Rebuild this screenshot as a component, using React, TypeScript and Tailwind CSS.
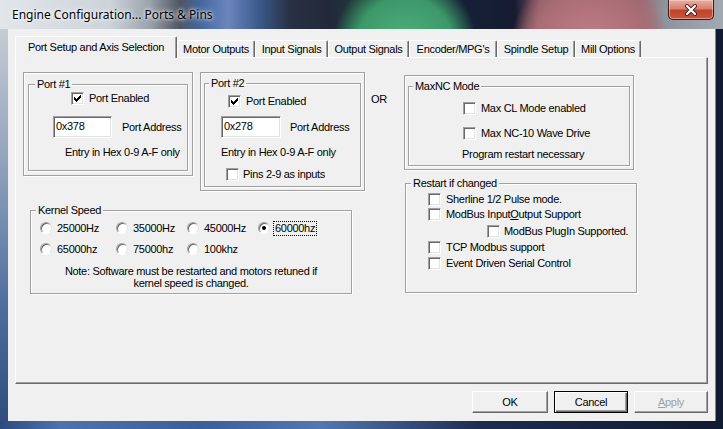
import React from 'react'

const Check = ({ checked = false }: { checked?: boolean }) => (
  <span className="w-[13px] h-[13px] shrink-0 bg-white border border-t-[#a0a0a0] border-l-[#a0a0a0] border-b-white border-r-white shadow-[inset_1px_1px_0_#696969,inset_-1px_-1px_0_#e3e3e3] flex items-center justify-center">
    {checked && (
      <svg width="7" height="7" viewBox="0 0 7 7" shapeRendering="crispEdges">
        <path
          d="M6 0h1v1h-1zM5 1h2v1h-2zM0 2h1v1h-1zM4 2h3v1h-3zM0 3h2v1h-2zM3 3h3v1h-3zM0 4h5v1h-5zM1 5h3v1h-3zM2 6h1v1h-1z"
          fill="#000"
        />
      </svg>
    )}
  </span>
)

const Radio = ({ checked = false }: { checked?: boolean }) => (
  <span className="w-[12px] h-[12px] shrink-0 rounded-full bg-white border border-t-[#a0a0a0] border-l-[#a0a0a0] border-b-white border-r-[#e3e3e3] shadow-[inset_1px_1px_0_#696969] flex items-center justify-center">
    {checked && <span className="w-[4px] h-[4px] rounded-full bg-black" />}
  </span>
)

// etched group box, legend sits on the top line
const Group = ({ label, lm, className, children }: { label: string; lm: string; className?: string; children?: React.ReactNode }) => (
  <fieldset className={`border border-[#a0a0a0] shadow-[inset_1px_1px_0_#fff,1px_1px_0_#fff] ${className ?? ''}`}>
    <legend className={`${lm} px-[2px] bg-[#f0f0f0] leading-[13px]`}>{label}</legend>
    {children}
  </fieldset>
)

const Row = ({ className, checked, children }: { className?: string; checked?: boolean; children: React.ReactNode }) => (
  <div className={`flex items-center h-[14px] gap-[5px] ${className ?? ''}`}>
    <Check checked={checked} />
    <span>{children}</span>
  </div>
)

const HexInput = ({ value, w }: { value: string; w: string }) => (
  <div className={`${w} h-[22px] bg-white border border-t-[#a0a0a0] border-l-[#a0a0a0] border-b-white border-r-white shadow-[inset_1px_1px_0_#696969,inset_-1px_-1px_0_#e3e3e3] pl-[2px] pt-[3px] leading-[13px]`}>
    {value}
  </div>
)

const RadioItem = ({ label, w, checked, focus }: { label: string; w: string; checked?: boolean; focus?: boolean }) => (
  <div className={`flex items-center gap-[3px] ${w}`}>
    <Radio checked={checked} />
    <span className={focus ? 'border border-dotted border-black px-[1px] leading-[13px]' : 'px-[2px]'}>{label}</span>
  </div>
)

const tabs = [
  { label: 'Motor Outputs', w: 'w-[78px]' },
  { label: 'Input Signals', w: 'w-[73px]' },
  { label: 'Output Signals', w: 'w-[81px]' },
  { label: "Encoder/MPG's", w: 'w-[88px]' },
  { label: 'Spindle Setup', w: 'w-[78px]' },
  { label: 'Mill Options', w: 'w-[66px]' },
]

export default function App() {
  return (
    <div className="w-[723px] h-[429px] flex flex-col overflow-hidden bg-[#141d35] font-['Liberation_Sans',Arial,sans-serif] text-[11px] leading-[13px] tracking-[-0.3px] text-black">
      {/* title bar over glass */}
      <div className="h-[29px] shrink-0 flex justify-between bg-[radial-gradient(circle_at_405px_45px,#52b07f_0,#3c9868_48px,transparent_72px),radial-gradient(circle_at_590px_48px,#c3808a_0,#aa6d75_55px,transparent_80px),linear-gradient(90deg,#e2e6eb_0px,#cdd3da_110px,#9aa2ac_150px,#4e5563_180px,#44679e_200px,#6a86bd_228px,#3c5b8d_258px,#283043_290px,#23293a_330px,#1d3a3a_360px,#152036_470px,#161b30_515px,#8a5862_540px,#9c666e_640px,#8e949d_665px,#a3a9b1_723px)]">
        <div className="pl-[12px] pt-[8px] font-['Noto_Sans',sans-serif] text-[12px] leading-[14px] tracking-[0px] [text-shadow:0_0_6px_#fff,0_0_3px_#fff]">
          Engine Configuration... Ports &amp; Pins
        </div>
        <div className="mr-[9px] w-[46px] h-[20px] rounded-b-[5px] border border-t-0 border-[#3b1c1c] bg-[linear-gradient(180deg,#e6b0a4_0%,#d8806c_45%,#c1432c_55%,#c8563c_100%)] shadow-[inset_0_0_0_1px_rgba(255,220,210,0.5)] flex items-center justify-center">
          <svg width="14" height="12" viewBox="0 0 14 12">
            <path d="M3 2l8 8M11 2l-8 8" stroke="#4a1f1a" strokeWidth="4" strokeLinecap="round" />
            <path d="M3 2l8 8M11 2l-8 8" stroke="#fff" strokeWidth="2.2" strokeLinecap="round" />
          </svg>
        </div>
      </div>

      <div className="flex flex-1">
        <div className="w-[8px] bg-[linear-gradient(180deg,#c5ccd5_0%,#8fa1bc_35%,#4f6f9f_70%,#2f4d80_100%)]" />

        {/* client area */}
        <div className="w-[707px] h-[392px] bg-[#f0f0f0] flex flex-col px-[7px] pt-[7px]">
          {/* tab strip */}
          <div className="h-[21px] flex items-end relative z-10">
            <div className="w-[162px] h-[22px] -mb-[1px] bg-[#f0f0f0] border-t border-l border-white border-r border-r-[#696969] shadow-[inset_-1px_0_0_#a0a0a0] rounded-t-[2px] flex items-center justify-center">
              Port Setup and Axis Selection
            </div>
            {tabs.map((t) => (
              <div
                key={t.label}
                className={`${t.w} h-[17px] border-t border-l border-white border-r border-r-[#696969] shadow-[inset_-1px_0_0_#a0a0a0] rounded-t-[2px] flex items-center justify-center`}
              >
                {t.label}
              </div>
            ))}
          </div>

          {/* tab page */}
          <div className="h-[327px] border border-t-white border-l-white border-r-[#696969] border-b-[#696969] shadow-[inset_-1px_-1px_0_#a0a0a0] flex pl-[7px] pt-[14px]">
            <div className="w-[381px] flex flex-col">
              <div className="flex items-start">
                {/* Port #1 */}
                <div className="w-[170px] h-[104px] border border-[#a0a0a0] shadow-[inset_1px_1px_0_#fff,1px_1px_0_#fff] px-[4px] pt-[5px] pb-[4px] flex flex-col">
                  <Group label="Port #1" lm="ml-[6px]" className="flex-1">
                    <Row className="pl-[42px]" checked>Port Enabled</Row>
                    <div className="flex items-center gap-[10px] mt-[11px] pl-[24px]">
                      <HexInput value="0x378" w="w-[59px]" />
                      <span>Port Address</span>
                    </div>
                    <div className="mt-[8px] pl-[36px]">Entry in Hex 0-9 A-F only</div>
                  </Group>
                </div>

                {/* Port #2 */}
                <div className="ml-[7px] w-[165px] h-[119px] border border-[#a0a0a0] shadow-[inset_1px_1px_0_#fff,1px_1px_0_#fff] px-[3px] pt-[4px] pb-[3px] flex flex-col">
                  <Group label="Port #2" lm="ml-[4px]" className="flex-1">
                    <Row className="pl-[23px] mt-[4px]" checked>Port Enabled</Row>
                    <div className="flex items-center gap-[9px] mt-[8px] pl-[16px]">
                      <HexInput value="0x278" w="w-[60px]" />
                      <span>Port Address</span>
                    </div>
                    <div className="mt-[8px] pl-[16px]">Entry in Hex 0-9 A-F only</div>
                    <Row className="pl-[21px] mt-[8px] !gap-[4px]">Pins 2-9 as inputs</Row>
                  </Group>
                </div>

                <div className="ml-[6px] mt-[21px]">OR</div>
              </div>

              {/* Kernel speed */}
              <Group label="Kernel Speed" lm="ml-[5px]" className="ml-[7px] mt-[13px] w-[322px] h-[90px]">
                <div className="flex pl-[9px] mt-[4px] h-[14px]">
                  <RadioItem label="25000Hz" w="w-[76px]" />
                  <RadioItem label="35000Hz" w="w-[71px]" />
                  <RadioItem label="45000Hz" w="w-[71px]" />
                  <RadioItem label="60000hz" w="w-[80px]" checked focus />
                </div>
                <div className="flex pl-[9px] mt-[7px] h-[14px]">
                  <RadioItem label="65000hz" w="w-[76px]" />
                  <RadioItem label="75000hz" w="w-[71px]" />
                  <RadioItem label="100khz" w="w-[71px]" />
                </div>
                <div className="mt-[9px] text-center leading-[12px]">
                  Note: Software must be restarted and motors retuned if
                  <br />
                  kernel speed is changed.
                </div>
              </Group>
            </div>

            <div className="w-[233px] flex flex-col">
              {/* MaxNC */}
              <div className="mt-[3px] w-[230px] h-[95px] border border-[#a0a0a0] shadow-[inset_1px_1px_0_#fff,1px_1px_0_#fff] px-[3px] pt-[4px] pb-[3px] flex flex-col">
                <Group label="MaxNC Mode" lm="ml-[4px]" className="flex-1">
                  <Row className="pl-[54px] mt-[8px]">Max CL Mode enabled</Row>
                  <Row className="pl-[54px] mt-[11px]">Max NC-10 Wave Drive</Row>
                  <div className="mt-[8px] pl-[53px]">Program restart necessary</div>
                </Group>
              </div>

              {/* Restart if changed */}
              <Group label="Restart if changed" lm="ml-[5px]" className="ml-[1px] mt-[7px] w-[232px] h-[116px]">
                <Row className="pl-[22px] mt-[2px]">Sherline 1/2 Pulse mode.</Row>
                <Row className="pl-[22px] mt-[1px]">
                  ModBus Input<span className="underline">O</span>utput Support
                </Row>
                <Row className="pl-[81px] mt-[3px] !gap-[4px]">ModBus PlugIn Supported.</Row>
                <Row className="pl-[22px] mt-[2px]">TCP Modbus support</Row>
                <Row className="pl-[22px] mt-[2px]">Event Driven Serial Control</Row>
              </Group>
            </div>
          </div>

          {/* dialog buttons */}
          <div className="mt-[7px] flex justify-end gap-[6px]">
            <button className="w-[76px] h-[22px] bg-[#f0f0f0] border border-t-white border-l-white border-r-[#696969] border-b-[#696969] shadow-[inset_-1px_-1px_0_#a0a0a0]">
              OK
            </button>
            <button className="w-[74px] h-[22px] bg-[#f0f0f0] border border-black shadow-[inset_1px_1px_0_#fff,inset_-1px_-1px_0_#696969,inset_-2px_-2px_0_#a0a0a0]">
              Cancel
            </button>
            <button className="w-[74px] h-[22px] bg-[#f0f0f0] text-[#a0a0a0] border border-t-white border-l-white border-r-[#696969] border-b-[#696969] shadow-[inset_-1px_-1px_0_#a0a0a0]">
              <span className="underline">A</span>pply
            </button>
          </div>
        </div>

        <div className="w-[8px] bg-[#111a31] border-l border-[#7d8696]" />
      </div>

      <div className="h-[8px] shrink-0 bg-[linear-gradient(90deg,#2c4a7e_0px,#4d73ad_60px,#3b5f98_200px,#5278b0_320px,#1d2c4e_480px,#101a31_723px)]" />
    </div>
  )
}
